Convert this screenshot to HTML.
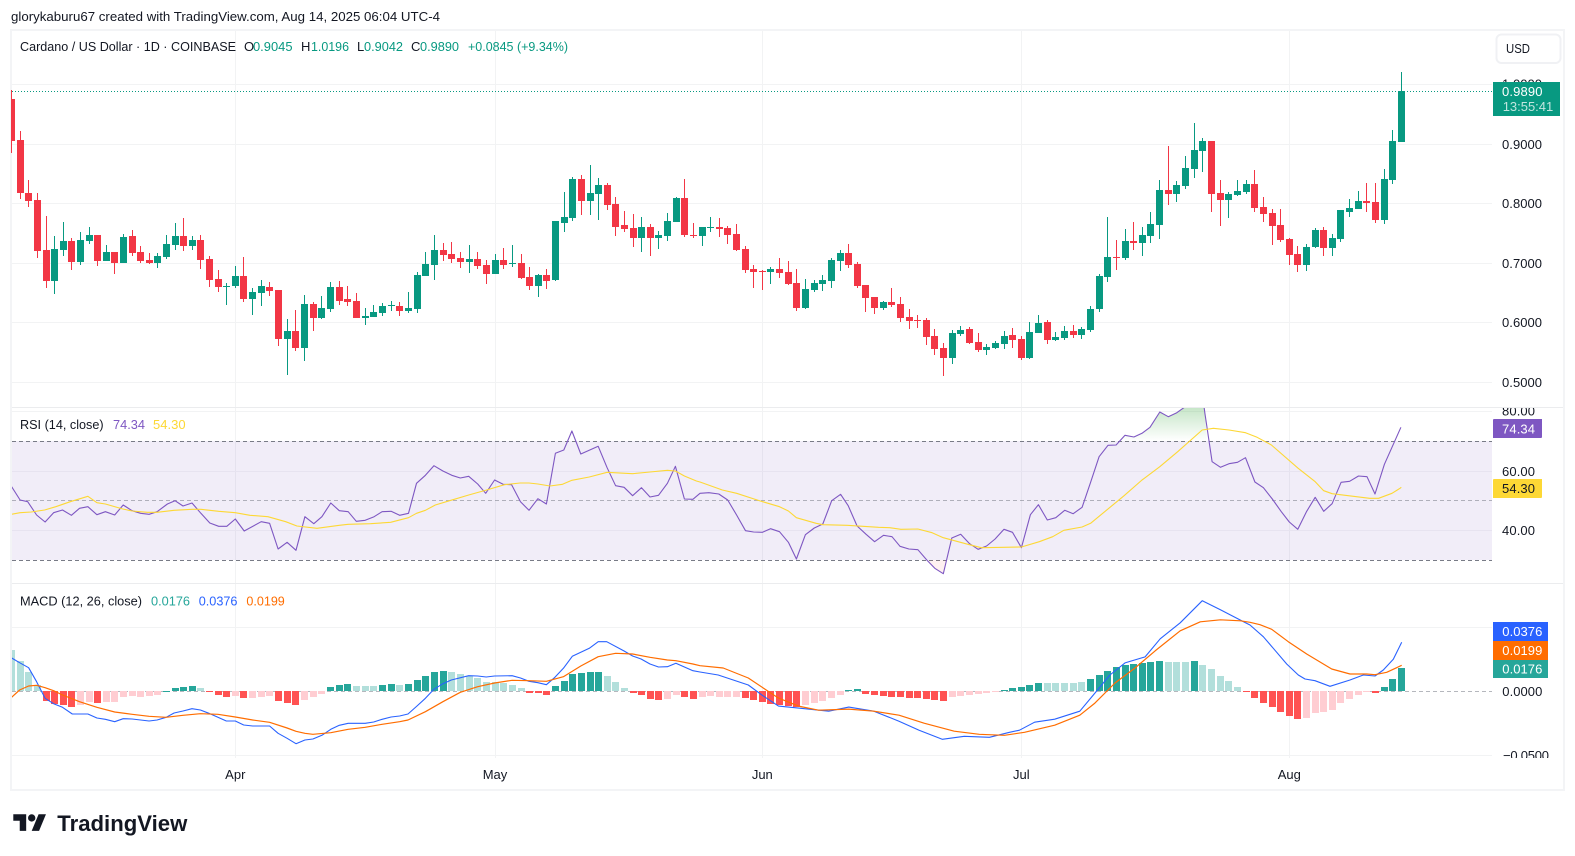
<!DOCTYPE html>
<html lang="en">
<head>
<meta charset="utf-8">
<title>Cardano / US Dollar chart</title>
<style>
html,body{margin:0;padding:0;background:#fff;width:1575px;height:856px;overflow:hidden}
svg{display:block}
text{font-family:"Liberation Sans",sans-serif;font-size:13px;fill:#131722}
.lbl{font-size:13px}
</style>
</head>
<body>
<svg xmlns="http://www.w3.org/2000/svg" width="1575" height="856" viewBox="0 0 1575 856">
<defs>
<clipPath id="cMain"><rect x="11" y="31" width="1481" height="376"/></clipPath>
<clipPath id="cRsi"><rect x="12" y="408" width="1480" height="175"/></clipPath>
<clipPath id="cMacd"><rect x="12" y="584" width="1480" height="174"/></clipPath>
<clipPath id="cAxR"><rect x="1493" y="408" width="68" height="175"/></clipPath>
<clipPath id="cAxM"><rect x="1493" y="584" width="68" height="174"/></clipPath>
<linearGradient id="gUp" gradientUnits="userSpaceOnUse" x1="0" y1="407" x2="0" y2="441"><stop offset="0" stop-color="#4caf50" stop-opacity=".32"/><stop offset="1" stop-color="#4caf50" stop-opacity="0"/></linearGradient>
</defs>

<text x="11" y="21" textLength="429" lengthAdjust="spacingAndGlyphs">glorykaburu67 created with TradingView.com, Aug 14, 2025 06:04 UTC-4</text>

<g shape-rendering="crispEdges">
<rect x="10" y="29" width="1555" height="2" fill="#f3f4f6"/>
<rect x="10" y="789" width="1555" height="2" fill="#f3f4f6"/>
<rect x="10" y="29" width="2" height="762" fill="#f3f4f6"/>
<rect x="1563" y="29" width="2" height="762" fill="#f3f4f6"/>
<g fill="#f2f3f4">
<rect x="235" y="31" width="1" height="727"/><rect x="495" y="31" width="1" height="727"/><rect x="762" y="31" width="1" height="727"/><rect x="1021" y="31" width="1" height="727"/><rect x="1289" y="31" width="1" height="727"/>
<rect x="12" y="84" width="1480" height="1"/><rect x="12" y="144" width="1480" height="1"/><rect x="12" y="203" width="1480" height="1"/><rect x="12" y="263" width="1480" height="1"/><rect x="12" y="322" width="1480" height="1"/><rect x="12" y="382" width="1480" height="1"/>
<rect x="12" y="411" width="1480" height="1"/>
<rect x="12" y="627" width="1480" height="1"/><rect x="12" y="755" width="1480" height="1"/>
</g>
<rect x="12" y="407" width="1551" height="1" fill="#ebecee"/>
<rect x="12" y="583" width="1551" height="1" fill="#ebecee"/>
<rect x="12" y="441" width="1480" height="119" fill="#7e57c2" fill-opacity=".11"/>
<rect x="12" y="471" width="1480" height="1" fill="#e7e3f0"/>
<rect x="12" y="530" width="1480" height="1" fill="#e7e3f0"/>
</g>

<line x1="12" x2="1492" y1="91.5" y2="91.5" stroke="#089981" stroke-width="1" stroke-dasharray="1 2"/>
<g id="candles" clip-path="url(#cMain)" shape-rendering="crispEdges"></g>

<g clip-path="url(#cRsi)">
<g stroke="#787b86" stroke-width="1" stroke-dasharray="4 3" shape-rendering="crispEdges">
<line x1="12" x2="1492" y1="441.5" y2="441.5"/>
<line x1="12" x2="1492" y1="560.5" y2="560.5"/>
<line x1="12" x2="1492" y1="500.5" y2="500.5" stroke-opacity=".55"/>
</g>
<g id="rsi"></g>
</g>

<g clip-path="url(#cMacd)">
<line x1="12" x2="1492" y1="691.5" y2="691.5" stroke="#787b86" stroke-opacity=".55" stroke-dasharray="4 3" shape-rendering="crispEdges"/>
<g id="hist" shape-rendering="crispEdges"></g>
<g id="macd"></g>
</g>

<!-- Legends -->
<text x="20" y="51" textLength="216" lengthAdjust="spacingAndGlyphs">Cardano / US Dollar · 1D · COINBASE</text>
<text x="244" y="51">O</text><text x="253" y="51" textLength="39.5" lengthAdjust="spacingAndGlyphs" style="fill:#089981">0.9045</text>
<text x="301" y="51">H</text><text x="311" y="51" textLength="38" lengthAdjust="spacingAndGlyphs" style="fill:#089981">1.0196</text>
<text x="357" y="51">L</text><text x="364" y="51" textLength="39" lengthAdjust="spacingAndGlyphs" style="fill:#089981">0.9042</text>
<text x="411" y="51">C</text><text x="420" y="51" textLength="39" lengthAdjust="spacingAndGlyphs" style="fill:#089981">0.9890</text>
<text x="468" y="51" textLength="100" lengthAdjust="spacingAndGlyphs" style="fill:#089981">+0.0845 (+9.34%)</text>

<text x="20" y="429" textLength="83.6" lengthAdjust="spacingAndGlyphs">RSI (14, close)</text>
<text x="113" y="429" textLength="32" lengthAdjust="spacingAndGlyphs" style="fill:#7e57c2">74.34</text>
<text x="153" y="429" textLength="32.6" lengthAdjust="spacingAndGlyphs" style="fill:#fdd835">54.30</text>

<text x="20" y="605.5" textLength="122" lengthAdjust="spacingAndGlyphs">MACD (12, 26, close)</text>
<text x="151" y="605.5" textLength="39" lengthAdjust="spacingAndGlyphs" style="fill:#26a69a">0.0176</text>
<text x="198.7" y="605.5" textLength="38.8" lengthAdjust="spacingAndGlyphs" style="fill:#2962ff">0.0376</text>
<text x="246.4" y="605.5" textLength="38.4" lengthAdjust="spacingAndGlyphs" style="fill:#ff6d00">0.0199</text>

<!-- USD -->
<rect x="1496.5" y="34.5" width="64" height="28.5" rx="5" fill="#fff" stroke="#f0f1f4" stroke-width="2"/>
<text x="1506" y="53" textLength="24" lengthAdjust="spacingAndGlyphs">USD</text>

<!-- Price axis -->
<g class="lbl">
<text x="1502" y="88.5" textLength="40">1.0000</text>
<text x="1502" y="149" textLength="40">0.9000</text>
<text x="1502" y="208" textLength="40">0.8000</text>
<text x="1502" y="268" textLength="40">0.7000</text>
<text x="1502" y="327" textLength="40">0.6000</text>
<text x="1502" y="387" textLength="40">0.5000</text>
</g>
<rect x="1493" y="82" width="67" height="34" fill="#089981" shape-rendering="crispEdges"/>
<text x="1502" y="96" textLength="40.5" style="fill:#fff">0.9890</text>
<text x="1502.7" y="111" textLength="50.5" style="fill:#fff;fill-opacity:.75">13:55:41</text>

<g clip-path="url(#cAxR)">
<text x="1502" y="415.5" textLength="33">80.00</text>
<text x="1502" y="476" textLength="33">60.00</text>
<text x="1502" y="535" textLength="33">40.00</text>
</g>
<rect x="1493" y="419" width="49" height="19" rx="1" fill="#7e57c2" shape-rendering="crispEdges"/>
<text x="1502" y="433.3" textLength="33" style="fill:#fff">74.34</text>
<rect x="1493" y="479" width="49" height="19" rx="1" fill="#fdd835" shape-rendering="crispEdges"/>
<text x="1502" y="493" textLength="33" style="fill:#131722">54.30</text>

<g clip-path="url(#cAxM)">
<text x="1502.3" y="696" textLength="40">0.0000</text>
<text x="1503" y="760" textLength="46">−0.0500</text>
</g>
<rect x="1493" y="622" width="55" height="19" fill="#2962ff" shape-rendering="crispEdges"/>
<text x="1502.3" y="636" textLength="40" style="fill:#fff">0.0376</text>
<rect x="1493" y="641" width="55" height="19" fill="#ff6d00" shape-rendering="crispEdges"/>
<text x="1502.3" y="655" textLength="40" style="fill:#fff">0.0199</text>
<rect x="1493" y="660" width="55" height="18" fill="#26a69a" shape-rendering="crispEdges"/>
<text x="1502.3" y="673.5" textLength="40" style="fill:#fff">0.0176</text>

<!-- Time axis -->
<g text-anchor="middle">
<text x="235.3" y="779">Apr</text>
<text x="495" y="779">May</text>
<text x="762.3" y="779">Jun</text>
<text x="1021.3" y="779">Jul</text>
<text x="1289.3" y="779">Aug</text>
</g>

<!-- Logo -->
<g transform="translate(13.3 810.6) scale(.92)" fill="#131722">
<path d="M14 22H7V11H0V4h14v18z"/><path d="M28 22h-8l7.5-18h8L28 22z"/><circle cx="20" cy="8" r="4"/>
</g>
<text x="57.3" y="831" textLength="130" lengthAdjust="spacingAndGlyphs" style="font-size:22px;font-weight:700">TradingView</text>
</svg>

<script>
(function(){
var K=[[0,11.7],[1,20.3],[26,235.3],[56,495.3],[87,762.3],[117,1021.3],[148,1289.3],[161,1401.3]];
function X(i){for(var k=0;k<K.length-1;k++){if(i<=K[k+1][0]){var a=K[k],b=K[k+1];return a[1]+(b[1]-a[1])*(i-a[0])/(b[0]-a[0]);}}return 1401.3;}
var C=[
[0,90,99,141,153],[0,131,140,193,199],[0,180,193,201,207],[0,193,200,251,258],[0,216,250,281,288],
[1,236,249,281,294],[1,222,241,250,256],[0,238,241,262,270],[1,232,240,262,265],[1,227,235,241,244],
[0,235,235,261,266],[1,245,252,261,261],[0,252,252,263,274],[1,234,237,263,263],[0,230,236,253,256],
[0,246,252,261,263],[0,253,260,263,264],[1,253,256,263,268],[1,235,244,257,259],[1,223,236,245,250],
[0,218,236,246,251],[1,236,240,246,250],[0,235,240,260,269],[0,256,259,280,287],[0,270,279,287,292],
[1,283,286,287,305],[1,266,276,286,288],[0,257,276,299,302],[1,288,292,299,315],[1,280,286,293,306],
[0,282,287,291,296],[0,290,290,339,346],[1,319,331,339,375],[0,310,331,348,351],[1,295,304,348,361],
[0,302,304,318,331],[1,296,308,318,319],[1,282,287,309,312],[0,281,287,301,305],[0,286,299,302,306],
[0,293,301,318,318],[1,308,316,318,325],[1,305,312,317,317],[1,303,306,313,316],[1,301,305,306,311],
[0,302,306,311,316],[1,292,308,311,313],[1,272,275,309,313],[1,252,264,276,276],[1,235,250,265,280],
[0,243,250,255,261],[0,242,254,259,263],[0,252,258,262,268],[1,245,259,262,273],[0,252,259,266,269],
[0,260,265,274,284],[1,254,260,274,274],[0,248,260,265,269],[1,245,263,264,267],[0,254,263,278,279],
[0,267,277,286,290],[1,274,275,286,297],[0,269,275,281,289],[1,221,221,280,281],[1,192,217,223,232],
[1,177,179,218,221],[0,175,179,201,215],[1,165,193,201,215],[1,178,185,194,220],[0,183,185,205,210],
[0,197,204,227,236],[0,211,225,229,232],[0,214,228,238,247],[1,217,227,238,252],[0,224,227,238,256],
[1,231,235,238,249],[1,213,221,236,241],[1,197,198,222,222],[0,179,198,235,237],[0,223,235,236,238],
[1,227,227,236,246],[1,217,227,228,232],[0,218,227,229,237],[0,226,228,235,244],[0,224,234,250,251],
[0,246,249,270,273],[0,265,269,272,288],[0,270,271,272,290],[1,267,269,272,284],[0,258,269,273,278],
[0,261,272,284,285],[0,269,283,308,311],[1,279,289,308,309],[1,280,283,290,292],[1,275,280,284,291],
[1,258,260,281,288],[1,250,253,261,271],[0,244,253,265,268],[0,262,264,286,288],[0,285,285,298,312],
[0,297,297,308,314],[1,301,302,308,310],[0,288,302,305,307],[0,297,304,318,322],[0,309,317,321,329],
[0,315,320,321,328],[0,318,320,337,345],[0,329,336,349,355],[0,343,348,358,376],[1,330,333,358,364],
[1,326,330,334,336],[0,327,329,343,344],[0,333,342,350,352],[1,344,347,350,355],[1,341,343,348,349],
[1,331,336,344,349],[0,328,335,340,348],[0,336,339,358,360],[1,322,332,358,359],[1,315,323,333,333],
[0,320,322,340,344],[1,332,337,340,341],[1,326,331,338,340],[0,325,331,335,338],[1,327,329,335,339],
[1,306,309,330,332],[1,274,276,309,312],[1,217,257,277,282],[0,240,257,258,270],[1,229,241,258,260],
[0,222,241,243,250],[1,227,235,243,256],[1,212,224,236,243],[1,180,190,225,239],[0,146,190,194,205],
[1,181,185,194,202],[1,156,168,186,189],[1,123,150,169,178],[1,138,141,151,172],[0,141,141,194,212],
[0,180,193,200,226],[1,192,194,200,218],[1,180,191,195,196],[1,180,184,192,194],[0,170,184,208,212],
[0,197,207,214,222],[0,209,213,226,245],[0,209,225,240,242],[0,238,239,255,265],[0,246,254,265,272],
[1,244,247,265,271],[1,228,230,247,248],[0,227,230,248,256],[1,234,238,248,256],[1,210,210,239,242],
[1,199,208,212,217],[1,191,201,209,209],[0,183,201,203,212],[0,183,202,220,223],[1,169,179,220,224],
[1,130,141,180,184],[1,72,91,142,142]
];
var s='';
C.forEach(function(c,i){
 var x=Math.floor(X(i)),col=c[0]?'#089981':'#f23645';
 s+='<rect x="'+x+'" y="'+c[1]+'" width="1" height="'+Math.max(c[4]-c[1],1)+'" fill="'+col+'"/>';
 s+='<rect x="'+(x-3)+'" y="'+c[2]+'" width="7" height="'+Math.max(c[3]-c[2],1)+'" fill="'+col+'"/>';
});
document.getElementById('candles').innerHTML=s;

function M(l,x0,y0,sx,sy){var o=[];for(var i=0;i<l.length;i+=2){o.push((x0+l[i]*sx).toFixed(1)+','+(y0+l[i+1]*sy).toFixed(1));}return o;}
function PL(pts,col,w){return '<polyline fill="none" stroke="'+col+'" stroke-width="'+w+'" stroke-linejoin="round" points="'+pts.join(' ')+'"/>';}
var s224=1/2.24,t=1/3;

var r10=[25,258,45,300,62,305,82,345,101,366,120,338,140,330,160,346,178,325,197,320,217,344,236,335,257,345,276,315,296,332,315,340,334,343,352,335,375,312,392,302,410,318,430,309,450,340,470,369,490,379,508,379,527,357,547,393,585,365,604,370,623,447,643,427,663,451,683,350,703,371,721,350,741,309,760,332,780,335,798,364,818,361,838,350,856,335,876,334,895,346,915,340,933,250,953,226,972,197,992,213,1012,226,1031,234,1050,229,1070,252,1088,280,1108,240,1127,253,1146,254,1166,305,1185,331,1205,296,1224,312,1244,160,1263,150,1281,93,1301,162,1340,139,1360,203,1379,257,1398,262,1417,287,1437,263,1456,291,1475,286,1495,250,1513,199,1533,297,1552,298];
var r11=[0,280,20,278,42,282,62,300,82,345,102,392,120,396,140,397,158,386,178,395,198,427,216,477,236,404,256,384,275,372,295,302,315,283,332,317,352,378,372,403,391,425,411,406,430,410,448,439,468,447,488,449,508,480,526,505,545,521,564,414,584,403,604,431,623,448,642,438,661,417,681,388,700,397,720,443,740,344,758,314,778,360,797,353,817,331,836,341,856,322,875,247,894,170,914,136,932,135,952,106,972,111,990,100,1008,82,1030,36,1049,50,1068,38,1085,22,1128,10,1131,40,1147,185,1166,202,1185,191,1204,187,1222,173,1243,246,1262,263,1282,297,1302,335,1320,366,1339,388,1359,334,1378,292,1397,334,1416,311,1436,247,1455,244,1475,228,1494,230,1512,282,1533,193,1570,82];
var y10=[25,343,45,338,70,336,100,330,125,320,160,304,197,289,217,308,236,312,275,327,296,333,330,337,352,337,390,331,430,328,450,328,490,334,527,338,560,346,600,350,640,365,665,378,710,385,760,376,780,373,830,371,875,367,915,353,933,340,953,331,975,315,1010,301,1050,285,1090,270,1130,254,1165,249,1185,249,1205,252,1232,258,1260,253,1281,241,1320,231,1360,217,1417,221,1456,216,1495,211,1513,213,1533,228,1560,243];
var y11=[0,246,50,270,82,280,135,303,178,320,198,333,216,353,260,370,275,374,330,376,400,382,425,383,450,388,488,387,520,398,545,413,600,433,630,443,680,442,720,441,760,425,790,410,815,391,856,381,875,370,950,287,990,240,1030,200,1070,155,1125,90,1150,85,1185,90,1222,98,1248,112,1280,135,1340,205,1378,245,1397,272,1416,281,1500,295,1520,295,1550,280,1568,265];
var up=[940,124,952,106,972,111,990,100,1008,82,1030,36,1049,50,1068,38,1085,22,1128,10,1131,40,1136,124];
var dn=[508,481,526,505,545,521,552,481];
document.getElementById('rsi').innerHTML=
 '<polygon fill="url(#gUp)" points="'+M(up,700,400,s224,t).join(' ')+'"/>'+
 '<polygon fill="#ff5252" fill-opacity=".08" points="'+M(dn,700,400,s224,t).join(' ')+'"/>'+
 PL(M(r10,0,400,s224,t).concat(M(r11,700,400,s224,t)),'#7e57c2',1.1)+
 PL(M(y10,0,400,s224,t).concat(M(y11,700,400,s224,t),['1401.3,487.3']),'#fdd835',1.1);

var b12=[25,203,44,218,64,233,82,275,101,325,120,341,140,352,162,372,178,372,197,372,217,384,236,388,257,395,276,386,296,387,315,390,334,393,352,390,372,382,390,369,410,363,430,356,449,360,468,370,488,382,507,393,527,393,546,405,566,408,604,408,623,430,643,445,663,461,683,450,701,447,721,436,741,418,760,406,780,400,818,400,837,396,856,388,876,381,895,378,914,372,934,348,953,325,972,298,992,281,1011,270,1050,257,1070,258,1089,261,1108,258,1147,257,1166,264,1185,274,1205,278,1224,284,1243,262,1262,235,1282,199,1320,175,1340,155,1359,155,1398,183,1417,198,1436,207,1456,222,1475,231,1495,230,1514,220,1533,231,1552,242,1568,246];
var o12=[25,323,44,300,64,288,82,286,101,293,120,302,140,315,159,325,178,335,217,352,257,366,296,373,334,379,372,382,410,376,449,371,488,373,527,381,566,390,604,397,643,414,663,424,683,430,701,433,741,428,780,418,818,412,856,403,895,395,914,390,953,365,992,335,1031,307,1070,290,1108,279,1147,271,1185,272,1224,274,1262,260,1301,228,1340,200,1379,190,1417,192,1456,202,1495,210,1514,212,1552,222,1568,227];
var bm=[715,672,745,682,760,693,775,703,795,705,825,708,845,704,870,708,895,718,915,727,938,736,960,733,985,734,1005,729,1015,727,1030,719,1050,716,1075,708,1090,690,1105,672,1120,660,1140,654,1155,636,1175,620,1197,598,1215,607,1240,620];
var om=[720,665,745,675,760,685,775,695,795,703,815,707,845,706,870,708,895,712,920,720,950,728,975,731,1000,732,1020,729,1050,722,1075,712,1090,700,1110,680,1130,665,1150,648,1175,628,1195,619,1215,617,1235,618];
var b4=[0,105,40,140,70,175,110,222,145,255,165,267,195,272,240,289,300,270,340,255,375,258,400,240,430,208,455,157];
var o4=[0,97,30,104,65,118,115,155,170,192,245,237,300,252,350,252,375,254,410,247,455,226];
var k=1.00446;
document.getElementById('macd').innerHTML=
 PL(M(b12,0,590,s224,t).concat(M(bm,0,0,k,k),M(b4,1250,590,t,t)),'#2962ff',1.1)+
 PL(M(o12,0,590,s224,t).concat(M(om,0,0,k,k),M(o4,1250,590,t,t)),'#ff6d00',1.2);

/* histogram: colour letter + zoom-y of free end */
var c={a:'#b2dfdb',b:'#26a69a',c:'#ff5252',d:'#ffcdd2'};
var H='a180 a212 a246 a285 c332 c342 c346 c351 d345 d337 c340 d336 d336 d322 d318 d320 d318 d316 b302 b294 b291 b288 a293 c306 c315 c321 d318 c324 d324 d321 d318 c333 c339 c345 d330 d321 d312 b291 b285 b282 a288 a288 a288 b285 b282 a285 b282 b270 b258 b246 b243 a246 a252 a258 a264 a276 a276 a279 a285 a294 c309 c309 c315 b288 b273 b252 b249 b246 b246 a258 a276 a294 c309 c315 c327 c330 d327 d316 c321 c327 '+
'd322 d319 d322 d322 d322 c325 c331 c337 c343 c346 c349 c352 d346 d340 d334 d325 d316 b301 b298 c313 c316 c319 c322 c322 c325 c325 c328 c331 c334 d322 d319 d316 d313 d310 d307 b301 b295 b292 b286 b280 a280 a280 a280 a280 a277 '+
'b268 b256 b244 b232 b226 b223 b220 b217 b214 a216 a216 a216 b212 a226 a238 a259 a274 a292 c307 '+
'c323 c339 c351 c366 c378 c387 d384 d369 d366 d360 d339 d327 d315 d306 c309 b291 b267 b234';
var hs='';
H.split(' ').forEach(function(h,i){
 var z=parseInt(h.slice(1),10),x=Math.floor(X(i))-3,y=590+z/3,zy=691.33;
 var top=Math.round(Math.min(y,zy)),bot=Math.round(Math.max(y,zy));
 hs+='<rect x="'+x+'" y="'+top+'" width="7" height="'+Math.max(bot-top,1)+'" fill="'+c[h[0]]+'"/>';
});
document.getElementById('hist').innerHTML=hs;
})();
</script>
</body>
</html>
